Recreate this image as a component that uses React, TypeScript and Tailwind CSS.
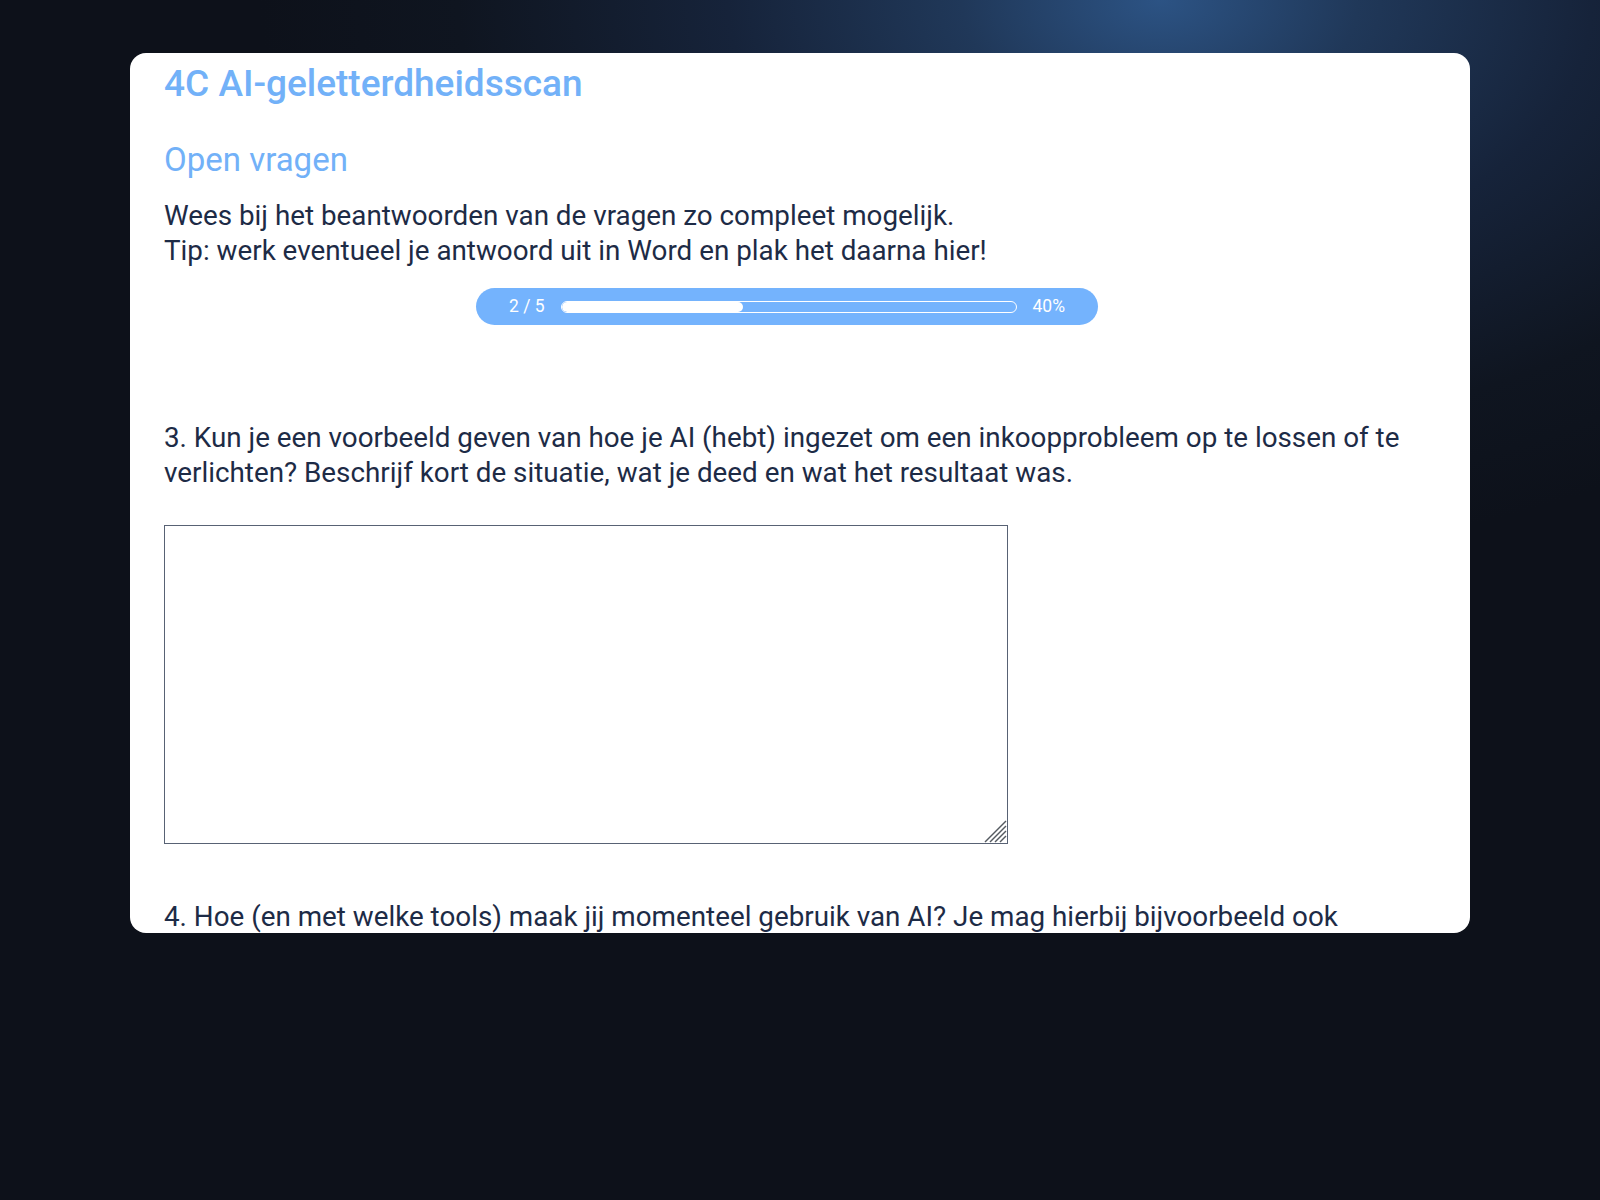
import { useState } from 'react';

const questions = [
  {
    id: 3,
    text: '3. Kun je een voorbeeld geven van hoe je AI (hebt) ingezet om een inkoopprobleem op te lossen of te verlichten? Beschrijf kort de situatie, wat je deed en wat het resultaat was.',
  },
  {
    id: 4,
    text: '4. Hoe (en met welke tools) maak jij momenteel gebruik van AI? Je mag hierbij bijvoorbeeld ook denken aan kleine, dagelijkse taken.',
  },
];

function ProgressPill({ step, total }: { step: number; total: number }) {
  const pct = Math.round((step / total) * 100);
  return (
    <div className="ml-[312px] mt-[20px] flex h-[37px] w-[622px] items-center gap-4 rounded-full bg-[#74b3fd] px-[33px] text-[17.5px] text-white">
      <span>
        {step} / {total}
      </span>
      <div className="h-[12px] flex-1 overflow-hidden rounded-full border border-white">
        <div className="h-full rounded-full bg-white" style={{ width: `${pct}%` }} />
      </div>
      <span>{pct}%</span>
    </div>
  );
}

// striped grip drawn in the textarea's bottom-right corner
function ResizeGrip() {
  return (
    <svg
      className="pointer-events-none absolute bottom-[1px] right-[1px] h-[24px] w-[24px] bg-white"
      viewBox="0 0 24 24"
      fill="none"
      stroke="#555a61"
      strokeWidth="1.5"
    >
      <line x1="2" y1="23" x2="23" y2="2" />
      <line x1="7" y1="23" x2="23" y2="7" />
      <line x1="12" y1="23" x2="23" y2="12" />
      <line x1="17" y1="23" x2="23" y2="17" />
    </svg>
  );
}

export default function App() {
  const [answers, setAnswers] = useState<Record<number, string>>({});

  return (
    <div className="min-h-[1200px] bg-[#0d111a] bg-[radial-gradient(ellipse_900px_560px_at_1160px_0px,#2c5384_0%,#203859_22%,#16233a_48%,#0f1520_78%,#0d111a_100%)] pt-[53px] font-['Roboto',sans-serif]">
      <div className="mx-auto h-[880px] w-[1340px] overflow-hidden rounded-2xl bg-white pl-[34px] pr-[50px] pt-[9px]">
        <h1 className="text-[37px] font-medium leading-[44px] text-[#72b1f8]">4C AI-geletterdheidsscan</h1>
        <h2 className="mt-[34px] text-[33px] leading-[40px] text-[#72b1f8]">Open vragen</h2>
        <p className="mt-[18px] text-[27.8px] leading-[35px] text-[#1d2b46]">
          Wees bij het beantwoorden van de vragen zo compleet mogelijk.
          <br />
          Tip: werk eventueel je antwoord uit in Word en plak het daarna hier!
        </p>

        <ProgressPill step={2} total={5} />

        {questions.map((q, i) => (
          <div key={q.id} className={i === 0 ? 'mt-[95px]' : 'mt-[55px]'}>
            <label htmlFor={`q${q.id}`} className="block text-[27.8px] leading-[35px] text-[#1d2b46]">
              {q.text}
            </label>
            <div className="relative mt-[35px] h-[319px] w-[844px]">
              <textarea
                id={`q${q.id}`}
                value={answers[q.id] ?? ''}
                onChange={(e) => setAnswers({ ...answers, [q.id]: e.target.value })}
                className="block h-full w-full resize-none border border-[#586274] bg-white p-2 text-[18px] text-[#1d2b46] outline-none"
              />
              <ResizeGrip />
            </div>
          </div>
        ))}
      </div>
    </div>
  );
}
